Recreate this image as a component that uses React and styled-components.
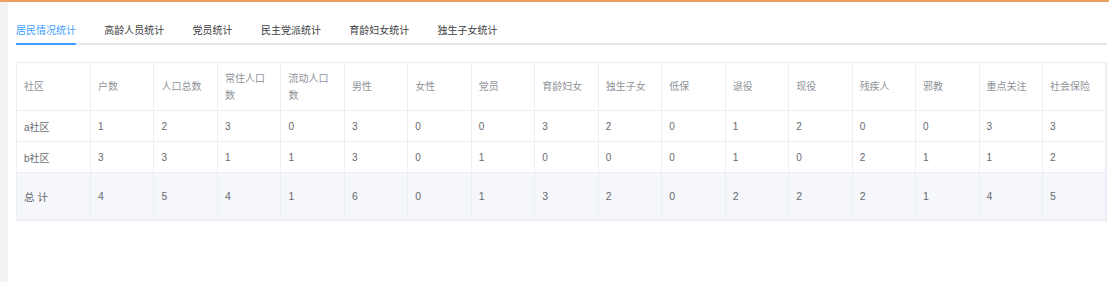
import React, {useState} from "react";
import styled, {createGlobalStyle} from "styled-components";

const GlobalStyle = createGlobalStyle`
  html, body {
    margin: 0;
    padding: 0;
    background: #ffffff;
    font-family: "Liberation Sans", "Noto Sans CJK SC", sans-serif;
  }
`;

const tabs = ["居民情况统计", "高龄人员统计", "党员统计", "民主党派统计", "育龄妇女统计", "独生子女统计"];

const columns = [
  "社区", "户数", "人口总数", "常住人口数", "流动人口数", "男性", "女性", "党员",
  "育龄妇女", "独生子女", "低保", "退役", "现役", "残疾人", "邪教", "重点关注", "社会保险",
];

const rows = [
  ["a社区", 1, 2, 3, 0, 3, 0, 0, 3, 2, 0, 1, 2, 0, 0, 3, 3],
  ["b社区", 3, 3, 1, 1, 3, 0, 1, 0, 0, 0, 1, 0, 2, 1, 1, 2],
];

const total = ["总 计", 4, 5, 4, 1, 6, 0, 1, 3, 2, 0, 2, 2, 2, 1, 4, 5];

const App = () => {
  const [active, setActive] = useState(0);

  return (
    <>
      <GlobalStyle />
      <Page>
        <Side />
        <Main>
          <TabBar>
            {tabs.map((t, i) => (
              <Tab key={t} $active={i === active} onClick={() => setActive(i)}>
                {t}
              </Tab>
            ))}
          </TabBar>
          <Table>
            <colgroup>
              <col style={{width: 74}} />
              {columns.slice(1).map((c) => (
                <col key={c} />
              ))}
            </colgroup>
            <thead>
              <tr>
                {columns.map((c) => (
                  <Th key={c}>{c}</Th>
                ))}
              </tr>
            </thead>
            <tbody>
              {rows.map((r) => (
                <tr key={r[0]}>
                  {r.map((v, i) => (
                    <Td key={i}>{v}</Td>
                  ))}
                </tr>
              ))}
              <TotalRow>
                {total.map((v, i) => (
                  <Td key={i} $total>
                    {v}
                  </Td>
                ))}
              </TotalRow>
            </tbody>
          </Table>
        </Main>
      </Page>
    </>
  );
};

const Page = styled.div`
  display: flex;
  height: 282px;
  border-top: 2px solid #e9a15e;
  box-sizing: border-box;
`;

const Side = styled.div`
  width: 8px;
  flex-shrink: 0;
  background-color: #f3f3f4;
`;

const Main = styled.div`
  flex: 1;
  padding: 0 2px 0 8px;
  display: flex;
  flex-direction: column;
`;

const TabBar = styled.div`
  display: flex;
  gap: 28.3px;
  height: 41px;
  align-items: stretch;
  border-bottom: 2px solid #e4e7ed;
`;

const Tab = styled.div`
  display: flex;
  align-items: center;
  padding-top: 14px;
  font-size: 10px;
  color: ${(p) => (p.$active ? "#409eff" : "#3c3d40")};
  cursor: pointer;
  margin-bottom: -2px;
  border-bottom: 2px solid ${(p) => (p.$active ? "#409eff" : "transparent")};
`;

const Table = styled.table`
  margin-top: 17px;
  width: 100%;
  table-layout: fixed;
  border-collapse: collapse;
  border-top: 1px solid #ebeef5;
  border-left: 1px solid #ebeef5;
  border-right: 2px solid #ebeef5;
  border-bottom: 2px solid #ebeef5;
  font-size: 10px;
`;

const Th = styled.th`
  height: 47px;
  padding: 0 8px 0 7px;
  text-align: left;
  font-weight: normal;
  color: #909399;
  line-height: 17px;
  border-right: 1px solid #ebeef5;
  border-bottom: 1px solid #ebeef5;
`;

const Td = styled.td`
  height: ${(p) => (p.$total ? "46px" : "30px")};
  padding: 0 8px 0 7px;
  color: #67696e;
  border-right: 1px solid #ebeef5;
  border-bottom: 1px solid #ebeef5;
  font-size: ${(p) => (p.$total ? "10.5px" : "10px")};
`;

const TotalRow = styled.tr`
  background-color: #f5f7fa;
`;

export default App;
